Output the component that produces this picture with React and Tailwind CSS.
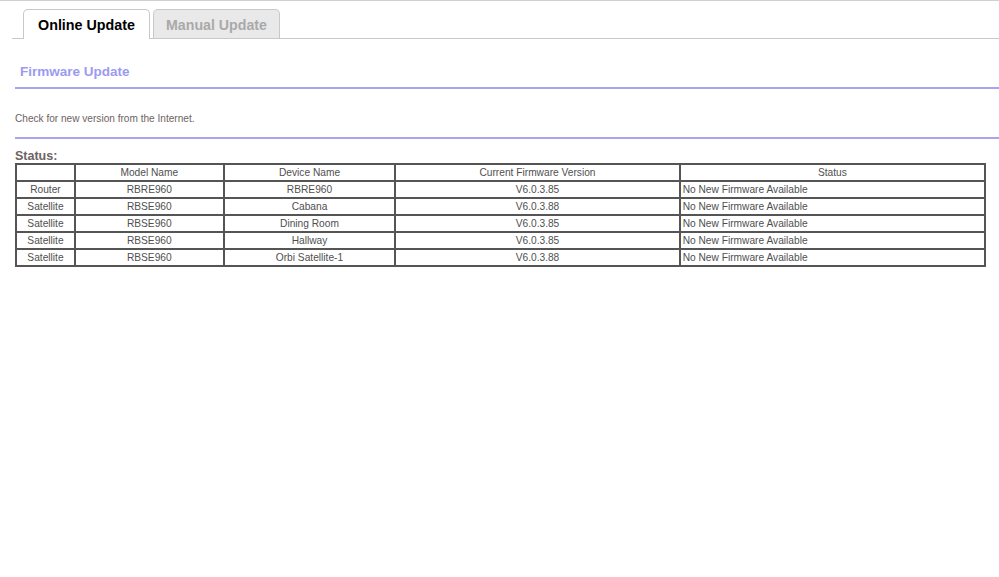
export default function App() {
  const rows = [
    ["Router", "RBRE960", "RBRE960", "V6.0.3.85"],
    ["Satellite", "RBSE960", "Cabana", "V6.0.3.88"],
    ["Satellite", "RBSE960", "Dining Room", "V6.0.3.85"],
    ["Satellite", "RBSE960", "Hallway", "V6.0.3.85"],
    ["Satellite", "RBSE960", "Orbi Satellite-1", "V6.0.3.88"],
  ];
  const td = "border-2 border-[#555] h-[17px] p-0 leading-[13px]";
  return (
    <div className="w-[999px] h-[577px] bg-white border-t border-[#d0d0d0] overflow-hidden" style={{ fontFamily: '"Liberation Sans", Arial, sans-serif' }}>
      <div className="ml-[12px] mt-[8px] flex items-end border-b border-[#c8c8c8] pl-[11px] gap-[3px]">
        <div className="w-[127px] h-[30px] -mb-px bg-white border border-b-0 border-[#c8c8c8] rounded-t-[5px] flex items-center justify-center pt-[3px] text-[14.3px] font-bold text-black">
          Online Update
        </div>
        <div className="w-[127px] h-[29px] bg-[#e9e9e9] border border-b-0 border-[#c8c8c8] rounded-t-[5px] flex items-center justify-center pt-[3px] text-[14.2px] font-bold text-[#a9a9a9]">
          Manual Update
        </div>
      </div>
      <div className="pl-[15px]">
        <div className="h-[48px] flex items-center pl-[5px] pt-[19px] pb-[1px]">
          <span className="text-[13.5px] font-bold text-[#9c9af2]">Firmware Update</span>
        </div>
        <div className="h-[2px] bg-[#a8a4f0]"></div>
        <div className="h-[48px] flex items-center pt-[11px]">
          <span className="text-[10.1px] text-[#6e6262]">Check for new version from the Internet.</span>
        </div>
        <div className="h-[2px] bg-[#a8a4f0]"></div>
        <div className="pt-[10px] text-[12.5px] font-bold text-[#6e6262] leading-[14px]">Status:</div>
        <table className="border-collapse w-[971px] text-[10.2px] text-[#4f4f4f] border-2 border-[#555]">
          <colgroup>
            <col className="w-[59px]" />
            <col className="w-[149px]" />
            <col className="w-[172px]" />
            <col className="w-[285px]" />
            <col className="w-[306px]" />
          </colgroup>
          <thead>
            <tr>
              <td className={td}></td>
              <td className={`${td} text-center`}>Model Name</td>
              <td className={`${td} text-center`}>Device Name</td>
              <td className={`${td} text-center`}>Current Firmware Version</td>
              <td className={`${td} text-center`}>Status</td>
            </tr>
          </thead>
          <tbody>
            {rows.map((r, i) => (
              <tr key={i}>
                <td className={`${td} text-center`}>{r[0]}</td>
                <td className={`${td} text-center`}>{r[1]}</td>
                <td className={`${td} text-center`}>{r[2]}</td>
                <td className={`${td} text-center`}>{r[3]}</td>
                <td className={`${td} pl-[2px]`}>No New Firmware Available</td>
              </tr>
            ))}
          </tbody>
        </table>
      </div>
    </div>
  );
}
